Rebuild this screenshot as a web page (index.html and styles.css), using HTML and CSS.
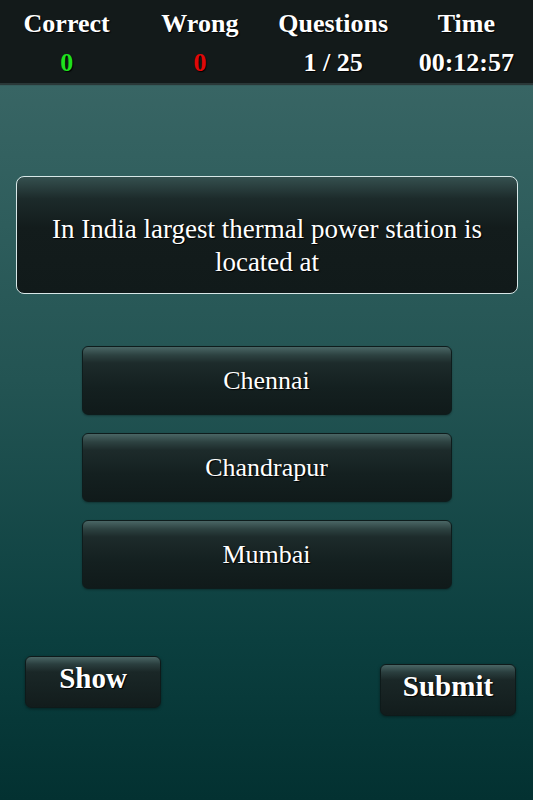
FILE: index.html
```html
<!DOCTYPE html>
<html>
<head>
<meta charset="utf-8">
<link rel="stylesheet" href="styles.css">
</head>
<body>
<div class="page">
  <header class="stats">
    <div class="stat"><div class="label">Correct</div><div class="value green">0</div></div>
    <div class="stat"><div class="label">Wrong</div><div class="value red">0</div></div>
    <div class="stat"><div class="label">Questions</div><div class="value">1 / 25</div></div>
    <div class="stat"><div class="label">Time</div><div class="value">00:12:57</div></div>
  </header>
  <main class="content">
    <div class="question">In India largest thermal power station is located at</div>
    <div class="options">
      <div class="option">Chennai</div>
      <div class="option">Chandrapur</div>
      <div class="option">Mumbai</div>
    </div>
    <div class="actions">
      <div class="btn show">Show</div>
      <div class="btn submit">Submit</div>
    </div>
  </main>
</div>
</body>
</html>
```
FILE: styles.css
```css
html, body {
  margin: 0;
  padding: 0;
  height: 100%;
}
body {
  font-family: "Liberation Serif", "Times New Roman", serif;
  color: #fff;
  background: linear-gradient(to bottom, #3e6a69 0px, #235453 380px, #0b3f3f 640px, #033131 800px);
}
.page {
  width: 533px;
  height: 800px;
  display: flex;
  flex-direction: column;
}
.stats {
  height: 83px;
  background: #131a1a;
  box-shadow: 0 2px 1px #2a3838;
  display: grid;
  grid-template-columns: repeat(4, 1fr);
  box-sizing: border-box;
  padding-top: 7px;
}
.stat {
  text-align: center;
  font-weight: bold;
  font-size: 26px;
  text-shadow: 1px 1px 1px #000;
}
.label {
  line-height: 34px;
}
.value {
  line-height: 46px;
  margin-top: -1px;
}
.green { color: #1fe01f; }
.red { color: #e00808; }
.content {
  display: flex;
  flex-direction: column;
  padding: 93px 15px 0 16px;
}
.question {
  height: 118px;
  box-sizing: border-box;
  border: 1.5px solid #d8e8e8;
  border-radius: 8px;
  background: linear-gradient(to bottom, #35504f 0px, #1c2a2a 22px, #131c1c 50px, #111a1a 100%);
  display: flex;
  align-items: center;
  justify-content: center;
  text-align: center;
  font-size: 27px;
  line-height: 33px;
  padding: 22px 30px 0;
  text-shadow: 1px 1px 1px #000;
}
.options {
  display: flex;
  flex-direction: column;
  gap: 18px;
  margin-top: 52px;
  align-items: center;
  padding-right: 1px;
}
.option {
  width: 370px;
  height: 69px;
  box-sizing: border-box;
  border: 1px solid #0e1c1c;
  border-radius: 6px;
  background: linear-gradient(to bottom, #4a6665 0px, #2d4241 8px, #1d2b2b 16px, #142020 40px, #101a1a 100%);
  display: flex;
  align-items: center;
  justify-content: center;
  font-size: 26px;
  padding-bottom: 0;
  text-shadow: 1px 1px 1px #000;
  box-shadow: 0 1px 2px rgba(0,0,0,0.3);
}
.actions {
  display: flex;
  justify-content: space-between;
  margin-top: 67px;
  padding-left: 9px;
  padding-right: 2px;
}
.btn {
  width: 136px;
  height: 52px;
  box-sizing: border-box;
  border: 1px solid #0e1a1a;
  border-radius: 6px;
  background: linear-gradient(to bottom, #4a6665 0px, #2b3f3f 7px, #1a2727 15px, #121c1c 100%);
  display: flex;
  justify-content: center;
  font-weight: bold;
  font-size: 29px;
  line-height: 42px;
  text-shadow: 1px 1px 1px #000;
  box-shadow: 0 1px 3px rgba(0,0,0,0.4);
}
.submit {
  margin-top: 8px;
  padding-top: 0;
}
```
